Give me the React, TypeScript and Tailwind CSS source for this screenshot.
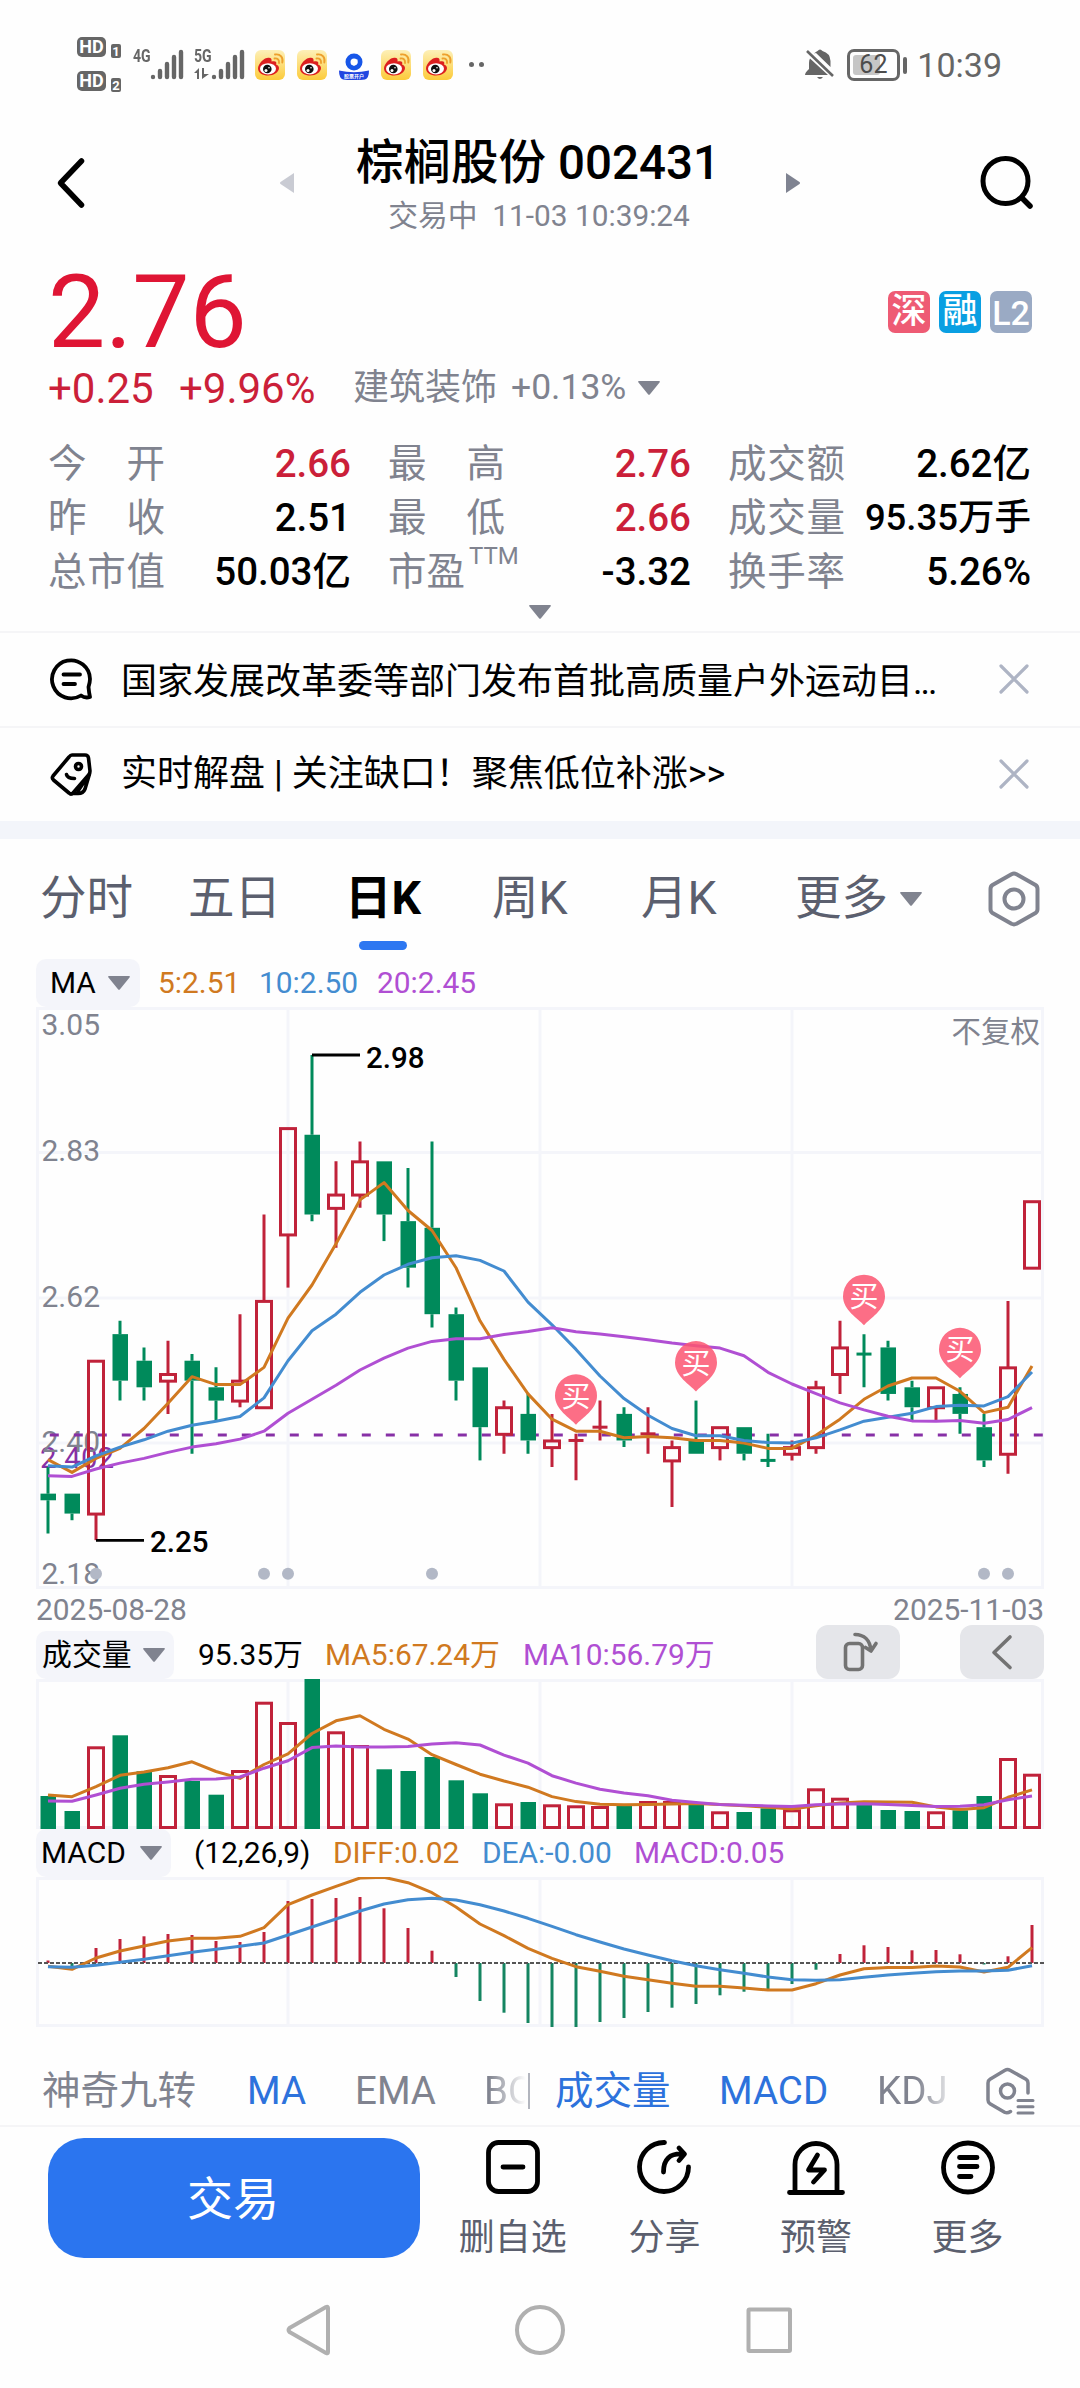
import type { ReactNode } from "react";
import clsx from "clsx";

const RED = "#c0223a";
const GREEN = "#008a5b";
const ORANGE = "#d07920";
const BLUE = "#438cd0";
const PURPLE = "#b04fd3";
const GRID = "#f4f5fa";
const FONT = "Roboto, 'Noto Sans CJK SC', sans-serif";

const STEP = 24;
const WIDTH = 1008;

// [open, close, high, low] in cents, oldest first
const candles = [
  [232, 231, 236, 226],
  [232, 229, 232, 228],
  [229, 252, 252, 225],
  [256, 249, 258, 246],
  [252, 248, 254, 246],
  [249, 250, 255, 244],
  [252, 249, 253, 238],
  [248, 246, 251, 243],
  [246, 249, 259, 245],
  [245, 261, 274, 245],
  [271, 287, 287, 263],
  [286, 274, 298, 273],
  [275, 277, 282, 269],
  [277, 282, 285, 275],
  [282, 274, 282, 270],
  [273, 266, 281, 263],
  [272, 259, 285, 257],
  [259, 249, 260, 246],
  [251, 242, 251, 237],
  [241, 245, 246, 238],
  [244, 240, 247, 238],
  [239, 240, 244, 236],
  [240, 240, 241, 234],
  [242, 242, 246, 240],
  [244, 240, 245, 239],
  [241, 241, 245, 238],
  [237, 239, 240, 230],
  [240, 238, 246, 238],
  [239, 242, 242, 237],
  [242, 238, 242, 237],
  [237, 237, 241, 236],
  [238, 239, 240, 237],
  [239, 248, 249, 238],
  [250, 254, 258, 247],
  [253, 253, 256, 248],
  [254, 247, 255, 246],
  [248, 245, 249, 243],
  [245, 248, 248, 243],
  [247, 244, 248, 241],
  [242, 237, 244, 236],
  [238, 251, 261, 235],
  [266, 276, 276, 266],
];

const volumes = [
  33, 18, 82.7, 93.7, 57.7, 54, 48, 34.3, 59, 127.3, 107, 150, 97.7, 84, 59.7,
  58, 72, 48.7, 35.7, 25.7, 27, 24.7, 23.7, 23, 23, 28, 28, 25.3, 17.7, 17,
  20.7, 19.7, 40.7, 31.3, 24.3, 19, 18, 17.7, 18.7, 33, 71, 55.3,
];

const macd = [
  2.5, -3, 15, 24, 26.7, 29, 28, 22, 21, 31, 62, 64, 65, 66, 54.7, 35, 12.3,
  -14, -38, -49.7, -60, -64, -64, -59, -55, -49, -44.7, -41, -32.3, -28.7, -26,
  -21, -6.7, 9, 17.7, 16, 12.7, 13, 8.7, -1.5, 6.7, 38,
];

const diff = [
  -3.3, -6.3, 5, 12, 17, 22, 24.7, 24.7, 26.7, 35.3, 58.3, 68, 76.7, 85, 85.7,
  80.3, 70.3, 56, 39, 27.3, 14.7, 4.7, -3.7, -8.3, -13.3, -16.7, -20.3, -23.3,
  -23.3, -25, -27, -27, -20.7, -12, -5.7, -4.5, -4.5, -3, -4, -9, -4.3, 15.3,
];

const dea = [
  -3.7, -4.3, -2.3, 0.7, 3.7, 7.3, 10.7, 13.7, 16.7, 20, 28, 36, 44, 52, 59,
  63.3, 64.7, 63, 58.3, 52, 44.7, 36.7, 28.3, 21, 14, 8, 2.3, -2.7, -6.7,
  -10.3, -14, -16.7, -17.3, -16.7, -14.3, -12, -10.3, -8.7, -8, -8, -7.3, -2.7,
];

// doji candles take their colour from the previous close
const RED_DOJI = [22, 23, 25];
const isUp = (i: number) =>
  candles[i][1] > candles[i][0] || RED_DOJI.includes(i);

const xAt = (i: number) => 12 + i * STEP;
const priceY = (cents: number) => 48 + (298 - cents) * 6.646;

// head holds the averages of the days that reach back before the first candle
function movingAverage(values: number[], days: number, head: number[]) {
  return values.map((_, i) => {
    if (i < days - 1) return head[i];
    const part = values.slice(i - days + 1, i + 1);
    return part.reduce((a, b) => a + b, 0) / days;
  });
}

const closes = candles.map((c) => c[1]);
const ma5 = movingAverage(closes, 5, [237.1, 235.2, 237.3, 238.8]);
const ma10 = movingAverage(
  closes,
  10,
  [236.2, 236, 237.7, 239, 240.1, 241.4, 242.3, 242.9, 243.6],
);
const ma20 = movingAverage(
  closes,
  20,
  [
    234.7, 234.6, 235.7, 236.6, 237.3, 238.2, 239, 239.5, 240.2, 241.4, 244.1,
    246.2, 248.3, 250.6, 252.4, 253.9, 254.9, 255.3, 255.3,
  ],
);
const vol5 = movingAverage(volumes, 5, [34, 32.3, 42.3, 53.7]);
const vol10 = movingAverage(
  volumes,
  10,
  [28, 27.7, 34, 40.7, 44.7, 47, 49.7, 50, 52],
);

function Line({
  values,
  y,
  color,
}: {
  values: number[];
  y: (v: number) => number;
  color: string;
}) {
  return (
    <polyline
      points={values.map((v, i) => `${xAt(i)},${y(v).toFixed(1)}`).join(" ")}
      fill="none"
      stroke={color}
      strokeWidth="3"
      strokeLinejoin="round"
    />
  );
}

function Grid({ height, rows = [] }: { height: number; rows?: number[] }) {
  return (
    <g stroke={GRID} strokeWidth="3" fill="none">
      <rect x="1.5" y="1.5" width={WIDTH - 3} height={height - 3} />
      {[252, 504, 756].map((x) => (
        <path key={x} d={`M${x} 0V${height}`} />
      ))}
      {rows.map((y) => (
        <path key={y} d={`M0 ${y}H${WIDTH}`} />
      ))}
    </g>
  );
}

function PriceChart() {
  const labels: [string, number][] = [
    ["3.05", 27.5],
    ["2.83", 154],
    ["2.62", 300],
    ["2.40", 445],
    ["2.18", 576.5],
  ];
  return (
    <svg
      width={WIDTH}
      height="582"
      fontFamily={FONT}
      fontSize="30"
      className="block"
    >
      <Grid height={582} rows={[145.5, 291, 436]} />
      <text x="4" y="460.5" fill="#8730a6" fontSize="29.5">
        2.402
      </text>
      {labels.map(([t, y]) => (
        <text key={t} x="5.5" y={y} fill="#80838f">
          {t}
        </text>
      ))}
      <text x="1004" y="35" fill="#80838f" fontSize="29.5" textAnchor="end">
        不复权
      </text>
      <path
        d="M13.8 428H1008"
        stroke="#8730a6"
        strokeWidth="2.8"
        strokeDasharray="9 15"
      />
      {candles.map(([open, close, high, low], i) => {
        const x = xAt(i);
        const top = priceY(Math.max(open, close));
        const bottom = priceY(Math.min(open, close));
        const color = isUp(i) ? RED : GREEN;
        return (
          <g key={i} stroke={color} strokeWidth="3">
            <path
              d={`M${x} ${priceY(high)}V${top}M${x} ${bottom}V${priceY(low)}`}
            />
            {open === close ? (
              <path d={`M${x - 7.5} ${top}h15`} />
            ) : close > open ? (
              <rect
                x={x - 7.5}
                y={top + 0.5}
                width="15"
                height={bottom - top}
                fill="none"
              />
            ) : (
              <rect
                x={x - 7.5}
                y={top}
                width="15.5"
                height={bottom - top}
                fill={color}
                stroke="none"
              />
            )}
          </g>
        );
      })}
      <Line values={ma5} y={priceY} color={ORANGE} />
      <Line values={ma10} y={priceY} color={BLUE} />
      <Line values={ma20} y={priceY} color={PURPLE} />
      <path d="M276 48h48M60 533.3h48" stroke="#000" strokeWidth="2.8" />
      <text x="330" y="60.5" fontWeight="500" fontSize="29.5">
        2.98
      </text>
      <text x="114" y="545" fontWeight="500" fontSize="29.5">
        2.25
      </text>
      {[2, 9, 10, 16, 39, 40].map((i) => (
        <circle key={i} cx={xAt(i)} cy="566.8" r="6" fill="#b2b8c6" />
      ))}
      {[22, 27, 34, 38].map((i) => (
        <g
          key={i}
          transform={`translate(${xAt(i)} ${priceY(candles[i][2]) - 9})`}
        >
          <path
            d="M0 0C-6-7-21-15-21-29A21 21.5 0 0 1 21-29C21-15 6-7 0 0Z"
            fill="#fc5571"
            fillOpacity="0.85"
          />
          <text y="-18" fill="#fff" fontSize="29" textAnchor="middle">
            买
          </text>
        </g>
      ))}
    </svg>
  );
}

function VolumeChart() {
  return (
    <svg width={WIDTH} height="150" className="block">
      <Grid height={150} />
      {volumes.map((v, i) => {
        const x = xAt(i);
        return isUp(i) ? (
          <rect
            key={i}
            x={x - 7.5}
            y={151.5 - v}
            width="15"
            height={v - 3}
            fill="none"
            stroke={RED}
            strokeWidth="3"
          />
        ) : (
          <rect
            key={i}
            x={x - 7.5}
            y={150 - v}
            width="15.5"
            height={v}
            fill={GREEN}
          />
        );
      })}
      <Line values={vol5} y={(v) => 150 - v} color={ORANGE} />
      <Line values={vol10} y={(v) => 150 - v} color={PURPLE} />
    </svg>
  );
}

function MacdChart() {
  const zero = 86;
  const y = (v: number) => zero - v;
  return (
    <svg width={WIDTH} height="150" className="block">
      <Grid height={150} />
      {macd.map((v, i) => (
        <path
          key={i}
          d={`M${xAt(i)} ${zero}V${y(v)}`}
          stroke={v > 0 ? RED : "#158561"}
          strokeWidth="3"
        />
      ))}
      <path
        d={`M2 ${zero}H${WIDTH}`}
        stroke="#555"
        strokeWidth="2"
        strokeDasharray="4 2"
      />
      <Line values={diff} y={y} color={ORANGE} />
      <Line values={dea} y={y} color={BLUE} />
    </svg>
  );
}

function Caret() {
  return (
    <svg
      viewBox="0 0 22 14"
      className="h-[14px] w-[22px] shrink-0 fill-[#80838f]"
    >
      <path d="M1 0H21Q22.500 0 21.500 1.500L12 13.300Q11 14.300 10 13.300L.5 1.500Q-.5 0 1 0Z" />
    </svg>
  );
}

function Signal() {
  return (
    <svg width="34" height="31" className="stroke-[#666]">
      <path
        d="M3 28v.1M10 22v6M17 15v13M24 8v20M31 3v25"
        strokeWidth="4.400"
        strokeLinecap="round"
      />
    </svg>
  );
}

function HdBadge({ n }: { n: number }) {
  return (
    <div className="flex items-end">
      <span className="flex h-5 w-[29px] items-center justify-center rounded-[5px] bg-[#666] text-[18px] leading-none font-bold text-white">
        HD
      </span>
      <span className="-mb-[1px] ml-[5px] flex h-[14px] w-[10px] items-center justify-center rounded-[2px] bg-[#666] text-[13px] leading-none font-bold text-white">
        {n}
      </span>
    </div>
  );
}

function WeiboIcon() {
  return (
    <svg width="30" height="30" viewBox="0 0 30 30">
      <defs>
        <linearGradient id="weibo" x1="0" y1="0" x2="0" y2="1">
          <stop offset="0" stopColor="#fdf0b8" />
          <stop offset="1" stopColor="#fccb3a" />
        </linearGradient>
      </defs>
      <rect width="30" height="30" rx="6" fill="url(#weibo)" />
      <path
        d="M12 8C9 8 3 14 3 18.500C3 23 8 25.500 13 25.500C19 25.500 24 22 24 18C24 16 22.500 15 21 14.500C22 12 21 10.500 16.500 11.500C17 9 16 7 12 8Z"
        fill="#dc1f1f"
      />
      <ellipse cx="13" cy="18.800" rx="8" ry="5.600" fill="#fff" />
      <circle cx="12.300" cy="19" r="4.300" fill="#111" />
      <circle cx="11" cy="20.500" r="1.500" fill="#fff" />
      <circle cx="14" cy="17.800" r="0.800" fill="#fff" />
      <path
        d="M19.500 8.500C22.500 8 24.500 10 24 13M20 4.500C25.500 3.500 28.500 8 27.300 12.500"
        fill="none"
        stroke="#eda02c"
        strokeWidth="1.900"
        strokeLinecap="round"
      />
    </svg>
  );
}

function BrokerIcon() {
  return (
    <svg width="30" height="30" viewBox="0 0 30 30">
      <circle cx="15" cy="12" r="6" fill="none" stroke="#1756e8" strokeWidth="5" />
      <path d="M14 9.500h4.500v4H16v2h-2Z" fill="#fff" />
      <path
        d="M0 20.500Q15 24 30 20.500Q30 28 26 29.500Q15 31 4 29.500Q0 28 0 20.500Z"
        fill="#2246e0"
      />
      <text
        x="15"
        y="28.300"
        fontSize="5"
        fontWeight="700"
        fill="#fff"
        textAnchor="middle"
        fontFamily={FONT}
      >
        股票开户
      </text>
    </svg>
  );
}

function StatusBar() {
  return (
    <div className="flex h-[130px] items-start pr-[78px] pl-[77px] text-[#666]">
      <div className="mt-[37px] flex w-[45px] flex-col gap-[14px]">
        <HdBadge n={1} />
        <HdBadge n={2} />
      </div>
      <div className="mt-[49px] ml-[11px] flex w-[51px]">
        <span className="-mt-[1px] w-[17px] origin-left scale-x-[.74] text-[19px] leading-4 font-bold">
          4G
        </span>
        <Signal />
      </div>
      <div className="mt-[49px] ml-[10px] flex w-[51px]">
        <div className="w-[17px]">
          <div className="-mt-[1px] origin-left scale-x-[.74] text-[19px] leading-4 font-bold">
            5G
          </div>
          <svg width="16" height="12" className="mt-[4px] fill-[#666]">
            <path d="M0 5 5 0V11H3V5ZM8 0H10V6H15L8 11Z" />
          </svg>
        </div>
        <Signal />
      </div>
      <div className="mt-[50px] ml-[10px] flex gap-3">
        <WeiboIcon />
        <WeiboIcon />
        <BrokerIcon />
        <WeiboIcon />
        <WeiboIcon />
      </div>
      <div className="mt-[62px] ml-4 flex gap-[5px]">
        <span className="h-[5px] w-[5px] rounded-full bg-[#666]" />
        <span className="h-[5px] w-[5px] rounded-full bg-[#666]" />
      </div>
      <svg
        width="30"
        height="32"
        viewBox="0 0 30 32"
        className="mt-[49px] ml-auto fill-[#666]"
      >
        <path d="M9 4.500Q11 2.500 12.500 2Q15-1 17.500 2Q25 4 25.500 12V18L11 4ZM5 9.500 23 26H0Q0 23.500 4 20V14Q4 11 5 9.500ZM12 28h6q-3 4-6 0Z" />
        <path d="M2 2 28 27" stroke="#666" strokeWidth="2.600" />
      </svg>
      <div className="mt-[49px] ml-3 flex items-center">
        <div className="flex h-[32px] w-[53px] rounded-[7px] border-[3px] border-[#666] p-[3px]">
          <div className="h-full w-[27px] rounded-[3px] bg-[#c6c6c6]">
            <span className="ml-[6px] block text-[25px] leading-5 text-[#4c4c4c]">
              62
            </span>
          </div>
        </div>
        <span className="ml-[3px] h-[17px] w-[4px] rounded-full bg-[#666]" />
      </div>
      <span className="mt-[45px] ml-[10px] text-[34px] leading-10">10:39</span>
    </div>
  );
}

function Header() {
  return (
    <div className="flex h-[106px] items-center">
      <svg width="30" height="52" className="ml-[56px]">
        <path
          d="M25.500 4 4.500 26l21 22"
          fill="none"
          stroke="#000"
          strokeWidth="5.500"
          strokeLinecap="round"
          strokeLinejoin="round"
        />
      </svg>
      <svg width="14" height="20" className="ml-[194px] fill-[#c9cbd3]">
        <path d="M14 0V20L.5 11Q-.5 10 .5 9Z" />
      </svg>
      <div className="flex w-[492px] flex-col items-center pt-[2px]">
        <h1 className="h-[56px] pr-[4px] text-[47.500px] leading-[56px] font-medium whitespace-nowrap">
          棕榈股份 002431
        </h1>
        <p className="mt-[8px] h-[34px] pr-[2px] text-[29.800px] leading-[34px] whitespace-pre text-[#80838f]">
          交易中{"  "}11-03 10:39:24
        </p>
      </div>
      <svg width="14" height="20" className="fill-[#7f8391]">
        <path d="M0 0V20L13.500 11Q14.500 10 13.500 9Z" />
      </svg>
      <svg width="54" height="54" className="ml-[180px]">
        <g fill="none" stroke="#000" strokeWidth="5">
          <circle cx="25.500" cy="25" r="22.500" />
          <path d="M42 42 50 50" strokeWidth="5.500" strokeLinecap="round" />
        </g>
      </svg>
    </div>
  );
}

const stats = [
  [
    { label: "今开", value: "2.66", up: true },
    { label: "最高", value: "2.76", up: true },
    { label: "成交额", value: "2.62亿" },
  ],
  [
    { label: "昨收", value: "2.51" },
    { label: "最低", value: "2.66", up: true },
    { label: "成交量", value: "95.35万手", small: true },
  ],
  [
    { label: "总市值", value: "50.03亿" },
    { label: "市盈", sup: "TTM", value: "-3.32" },
    { label: "换手率", value: "5.26%" },
  ],
];

function Quote() {
  return (
    <section className="px-12 pt-[25px]">
      <div className="flex items-center justify-between">
        <span className="h-[102px] text-[102px] leading-[102px] text-[#df1534]">
          2.76
        </span>
        <div className="flex gap-[9px] text-[35px] leading-[42px] text-white">
          <span className="h-[42px] w-[42px] rounded-[7px] bg-[#ee5b74] text-center font-medium">
            深
          </span>
          <span className="h-[42px] w-[42px] rounded-[7px] bg-[#0a9fe2] text-center font-medium">
            融
          </span>
          <span className="h-[42px] w-[42px] rounded-[7px] bg-[#9aaac4] text-center text-[34px] leading-[44px] font-medium">
            L2
          </span>
        </div>
      </div>
      <div className="-mt-[1px] flex h-[52px] items-center text-[#80838f]">
        <span className="w-[131px] text-[42px] text-[#cb1f39]">+0.25</span>
        <span className="w-[174px] text-[42px] text-[#cb1f39]">+9.96%</span>
        <span className="w-[158px] text-[36px]">建筑装饰</span>
        <span className="w-[127px] text-[35.500px]">+0.13%</span>
        <Caret />
      </div>
      <div className="mt-[23px]">
        {stats.map((row, r) => (
          <div key={r} className="flex h-[54px] items-center text-[38.500px]">
            {row.map((s, c) => (
              <div
                key={s.label}
                className={clsx(
                  "flex items-center justify-between whitespace-nowrap",
                  c < 2 ? "mr-[37px] w-[303px]" : "w-[303px]",
                )}
              >
                <span className="flex w-[117px] shrink-0 justify-between text-[#80838f]">
                  {s.sup ? (
                    <span>
                      {s.label}
                      <sup className="-top-[21px] ml-[4px] text-[24px]">
                        {s.sup}
                      </sup>
                    </span>
                  ) : (
                    s.label.split("").map((ch) => <span key={ch}>{ch}</span>)
                  )}
                </span>
                <span
                  className={clsx(
                    "font-medium",
                    s.up ? "text-[#cb1f39]" : "text-black",
                    s.small && "text-[36.500px]",
                  )}
                >
                  {s.value}
                </span>
              </div>
            ))}
          </div>
        ))}
      </div>
      <div className="flex h-[32px] justify-center pt-[6px]">
        <Caret />
      </div>
    </section>
  );
}

function CloseIcon() {
  return (
    <svg width="30" height="30" className="-mt-[2px] mr-[51px] ml-auto">
      <path
        d="M2 2 28 28M28 2 2 28"
        stroke="#aeb4c4"
        strokeWidth="3.200"
        strokeLinecap="round"
      />
    </svg>
  );
}

function News() {
  return (
    <section className="text-[36px]">
      <div className="flex h-[95px] items-center border-t-2 border-[#f5f5f7] pl-[50px]">
        <svg width="44" height="44" className="-mt-[2px] mr-[27px]">
          <g
            fill="none"
            stroke="#000"
            strokeWidth="3.800"
            strokeLinecap="round"
            strokeLinejoin="round"
          >
            <path d="M40 40Q35 41.500 31 38.500A19 19 0 1 1 40 22Q40 25 38.500 30Q39 36 40 40Z" />
            <path d="M13.500 17.500H30M13.500 27H25" />
          </g>
        </svg>
        <span className="pt-[5px]">
          国家发展改革委等部门发布首批高质量户外运动目
          <span className="tracking-[-2px]">...</span>
        </span>
        <CloseIcon />
      </div>
      <div className="flex h-[95px] items-center border-t-2 border-[#f5f5f7] pl-[50px]">
        <svg width="44" height="44" className="-mt-[1px] mr-[27px]">
          <g
            fill="none"
            stroke="#000"
            strokeWidth="3.600"
            strokeLinecap="round"
            strokeLinejoin="round"
          >
            <path d="M22 3H35Q38 3 38.500 6L40 19Q40 21 39 22.500L23 41Q21 43 19 41L3.500 28Q1.500 26 3 24L19 5Q20.500 3 22 3Z" />
            <path d="M39.500 22 35 37Q33 42 27 41.500H22M36 27 28 39" />
            <circle cx="28.500" cy="14.500" r="3" />
            <path d="M16.500 22.500Q17.500 26.500 24.500 26.500" />
          </g>
        </svg>
        <span className="-mt-[2px]">
          实时解盘 | 关注缺口！聚焦低位补涨&gt;&gt;
        </span>
        <CloseIcon />
      </div>
    </section>
  );
}

const tabs = [
  { label: "分时", width: "w-[148px]" },
  { label: "五日", width: "w-[157px]" },
  { label: "日K", width: "w-[147px]", active: true },
  { label: "周K", width: "w-[149px]" },
  { label: "月K", width: "w-[154px]" },
  { label: "更多", width: "w-[105px]" },
];

function Tabs() {
  return (
    <nav className="flex h-[120px] items-center pl-[40px] text-[46.500px] text-[#5b5f6e]">
      {tabs.map((t) => (
        <div
          key={t.label}
          className={clsx(
            "relative flex h-full items-center",
            t.width,
            t.active && "font-bold text-black",
          )}
        >
          {t.label}
          {t.active && (
            <span className="absolute bottom-[9px] left-[14px] h-[9px] w-12 rounded-full bg-[#2d77f1]" />
          )}
        </div>
      ))}
      <Caret />
      <svg
        width="54"
        height="56"
        className="-mt-[1px] ml-[65px] fill-none stroke-[#80838f] stroke-[4]"
      >
        <path
          d="M24.500 3.200Q27 2 29.500 3.200L48.500 14Q50.500 15.300 50.500 18V38Q50.500 40.700 48.500 42L29.500 52.800Q27 54 24.500 52.800L5.500 42Q3.500 40.700 3.500 38V18Q3.500 15.300 5.500 14Z"
          strokeLinejoin="round"
        />
        <circle cx="27" cy="28" r="9.500" />
      </svg>
    </nav>
  );
}

function IndicatorPicker({
  children,
  className,
}: {
  children: ReactNode;
  className?: string;
}) {
  return (
    <div
      className={clsx(
        "flex h-12 shrink-0 items-center justify-between rounded-[10px] bg-[#f4f5fa] text-black",
        className,
      )}
    >
      {children}
      <Caret />
    </div>
  );
}

function ToolButton({ children }: { children: ReactNode }) {
  return (
    <button className="-mt-[6px] h-[54px] w-[84px] rounded-xl bg-[#e5e6ea]">
      <svg
        width="84"
        height="54"
        fill="none"
        stroke="#737373"
        strokeWidth="3.600"
        strokeLinecap="round"
        strokeLinejoin="round"
      >
        {children}
      </svg>
    </button>
  );
}

function Charts() {
  return (
    <section className="px-9 text-[29.900px] whitespace-nowrap">
      <div className="flex h-12 items-center">
        <IndicatorPicker className="w-[104px] pr-[10px] pl-[14px]">
          MA
        </IndicatorPicker>
        <span className="ml-[18px] w-[101px] text-[#d07920]">5:2.51</span>
        <span className="w-[118px] text-[#438cd0]">10:2.50</span>
        <span className="text-[#b04fd3]">20:2.45</span>
      </div>
      <PriceChart />
      <div className="flex h-[42px] items-center justify-between pt-[1px] text-[#80838f]">
        <span>2025-08-28</span>
        <span>2025-11-03</span>
      </div>
      <div className="flex h-12 items-end">
        <IndicatorPicker className="w-[138px] pr-[9px] pl-[6px]">
          成交量
        </IndicatorPicker>
        <div className="flex h-12 items-center pt-[1px]">
          <span className="ml-[24px] w-[127px]">95.35万</span>
          <span className="w-[198px] text-[#d07920]">MA5:67.24万</span>
          <span className="text-[#b04fd3]">MA10:56.79万</span>
        </div>
        <div className="ml-auto flex gap-[60px]">
          <ToolButton>
            <rect x="29.500" y="18.500" width="17" height="26" rx="4" />
            <path d="M39 9.500C48 9.500 54 15 55 25.500M49.500 22.500 55 26 60 18.500" />
          </ToolButton>
          <ToolButton>
            <path d="M50 12 34 27.500 50 42.500" />
          </ToolButton>
        </div>
      </div>
      <VolumeChart />
      <div className="flex h-12 items-center">
        <IndicatorPicker className="w-[135px] pr-[9px] pl-[5px]">
          MACD
        </IndicatorPicker>
        <span className="ml-[23px] w-[139px]">(12,26,9)</span>
        <span className="w-[149px] text-[#d07920]">DIFF:0.02</span>
        <span className="w-[152px] text-[#438cd0]">DEA:-0.00</span>
        <span className="text-[#b04fd3]">MACD:0.05</span>
      </div>
      <MacdChart />
    </section>
  );
}

function IndicatorBar() {
  return (
    <div className="flex h-[98px] items-center pt-[29px] pl-[42px] text-[38.500px] whitespace-nowrap text-[#80838f]">
      <span className="w-[205px]">神奇九转</span>
      <span className="w-[108px] text-[#2d72dc]">MA</span>
      <span className="w-[129px]">EMA</span>
      <span className="w-[44px] overflow-hidden [mask-image:linear-gradient(to_right,#000_10%,transparent_95%)]">
        BOLL
      </span>
      <span className="h-9 w-[2px] bg-[#b2b5be]" />
      <span className="ml-[25px] w-[164px] text-[#2d72dc]">成交量</span>
      <span className="w-[158px] text-[#2d72dc]">MACD</span>
      <span className="w-[72px] overflow-hidden [mask-image:linear-gradient(to_right,#000_55%,transparent_110%)]">
        KDJ
      </span>
      <svg
        width="50"
        height="48"
        className="ml-[36px] fill-none stroke-[#80838f] stroke-[3.5]"
        strokeLinecap="round"
        strokeLinejoin="round"
      >
        <path d="M43 26V16Q43 13.500 41 12.300L25 3.200Q22.500 1.800 20 3.200L5 12.300Q3 13.500 3 16V33Q3 35.500 5 36.700L20 45.500Q22.500 46.500 25.500 44.500" />
        <circle cx="22.500" cy="24" r="7" />
        <path d="M33 33.500H48M33 39.700H48M33 45.900H48" strokeWidth="3" />
      </svg>
    </div>
  );
}

function Action({ label, children }: { label: string; children: ReactNode }) {
  return (
    <div className="flex w-[151.600px] flex-col items-center pt-[1px]">
      <svg
        width="60"
        height="58"
        fill="none"
        stroke="#000"
        strokeWidth="4.800"
        strokeLinecap="round"
        strokeLinejoin="round"
      >
        {children}
      </svg>
      <span className="mt-[21px] h-10 text-[36px] leading-10 text-[#5b5f6e]">
        {label}
      </span>
    </div>
  );
}

function ActionBar() {
  return (
    <div className="flex h-[144px] border-t-2 border-[#f5f5f7] pt-[11px] pl-12">
      <button className="mr-[17px] h-[120px] w-[372px] rounded-[36px] bg-[#2b75ef] pr-[2px] pt-[2px] text-[46px] text-white">
        交易
      </button>
      <Action label="删自选">
        <rect x="5.500" y="3.500" width="49" height="49" rx="10" />
        <path d="M20 28H40" />
      </Action>
      <Action label="分享">
        <path d="M30.500 3.500A24.500 24.500 0 1 0 54.500 28" />
        <path d="M29.500 33C29.500 20 36 14.500 48 15M45 9 50.500 15 45 21.500" />
      </Action>
      <Action label="预警">
        <path d="M3.500 53.500H56.500M9 53V25.500A21 21 0 0 1 51 25.500V53" />
        <path d="M31.500 16 22.500 31H38.500L27.500 43" />
      </Action>
      <Action label="更多">
        <circle cx="30" cy="28.500" r="24.500" />
        <path d="M21.500 18.500H39M21.500 27.500H39M21.500 37.500H33" />
      </Action>
    </div>
  );
}

function SystemNav() {
  return (
    <div className="flex h-[118px] items-center pt-[4px] pl-[285px]">
      <svg
        width="510"
        height="54"
        fill="none"
        stroke="#b0b0b0"
        strokeWidth="4"
        strokeLinejoin="round"
      >
        <path d="M43 5V49Q43 51 41 50L4.500 29Q2.500 27 4.500 25L41 4Q43 3 43 5Z" />
        <circle cx="255" cy="27" r="23" />
        <rect x="463.500" y="6.500" width="41.500" height="41.500" rx="1" />
      </svg>
    </div>
  );
}

export default function App() {
  return (
    <main className="h-[2388px] w-[1080px] overflow-hidden bg-[#fefefe] font-[Roboto,'Noto_Sans_CJK_SC',sans-serif] text-black">
      <StatusBar />
      <Header />
      <Quote />
      <News />
      <div className="h-[18px] bg-[#f3f5fa]" />
      <Tabs />
      <Charts />
      <IndicatorBar />
      <ActionBar />
      <SystemNav />
    </main>
  );
}
